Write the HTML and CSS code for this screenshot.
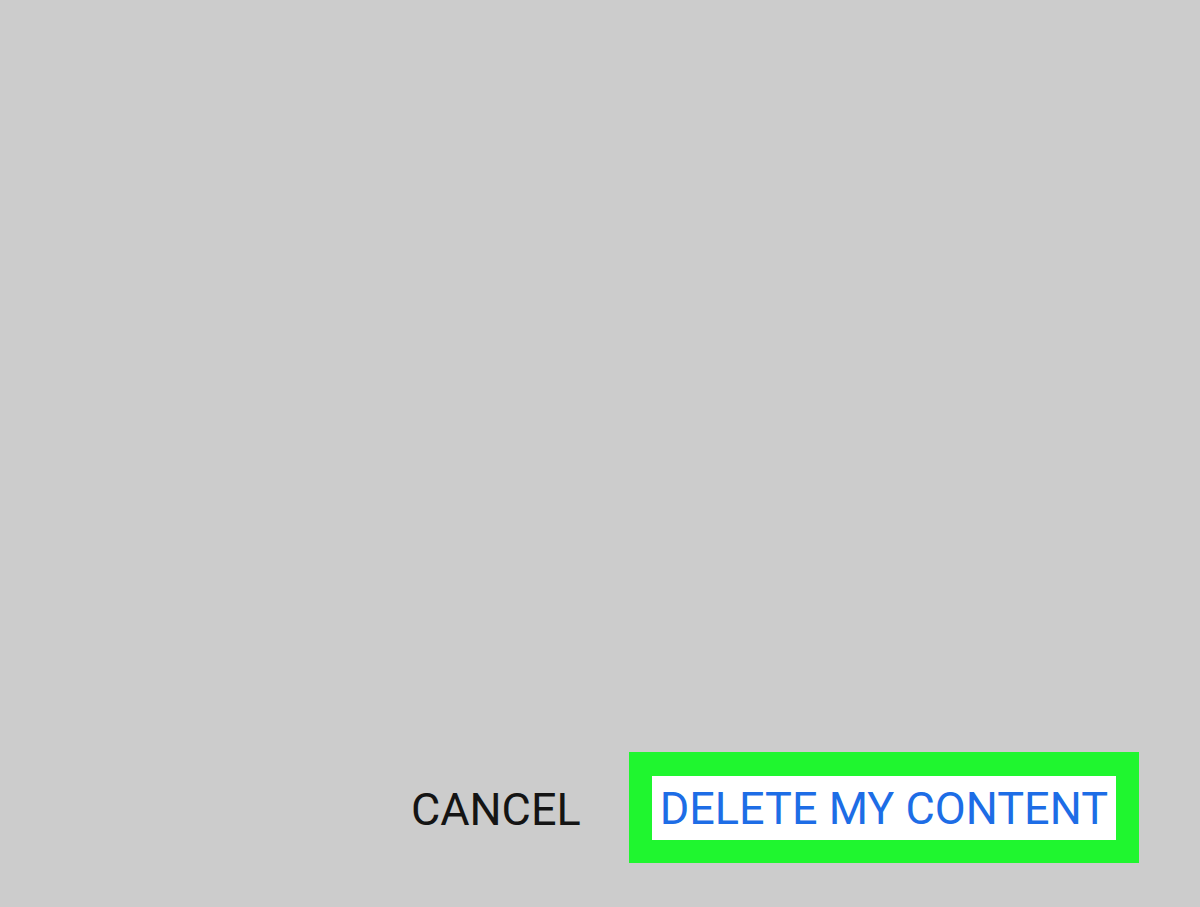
FILE: index.html
```html
<!DOCTYPE html>
<html>
<head>
<meta charset="utf-8">
<link rel="stylesheet" href="styles.css">
</head>
<body>
<div class="screen">
  <div class="spacer"></div>
  <div class="actions">
    <div class="cancel">CANCEL</div>
    <div class="highlight">
      <div class="delete">DELETE MY CONTENT</div>
    </div>
  </div>
</div>
</body>
</html>
```
FILE: styles.css
```css
html, body {
  margin: 0;
  padding: 0;
  background: #cccccc;
}
.screen {
  width: 1200px;
  height: 907px;
  display: flex;
  flex-direction: column;
  font-family: Roboto, "Liberation Sans", sans-serif;
}
.spacer {
  flex: 1;
}
.actions {
  display: flex;
  justify-content: flex-end;
  align-items: center;
  gap: 48px;
  padding: 0 61px 44px 0;
}
.cancel {
  font-size: 45px;
  color: #141414;
  line-height: 64px;
  margin-top: 5px;
}
.highlight {
  background: #1ff62f;
  padding: 24px 23px 23px 23px;
}
.delete {
  background: #ffffff;
  color: #1d6de6;
  font-size: 45px;
  line-height: 66px;
  height: 64px;
  padding: 0 8px;
}
```
